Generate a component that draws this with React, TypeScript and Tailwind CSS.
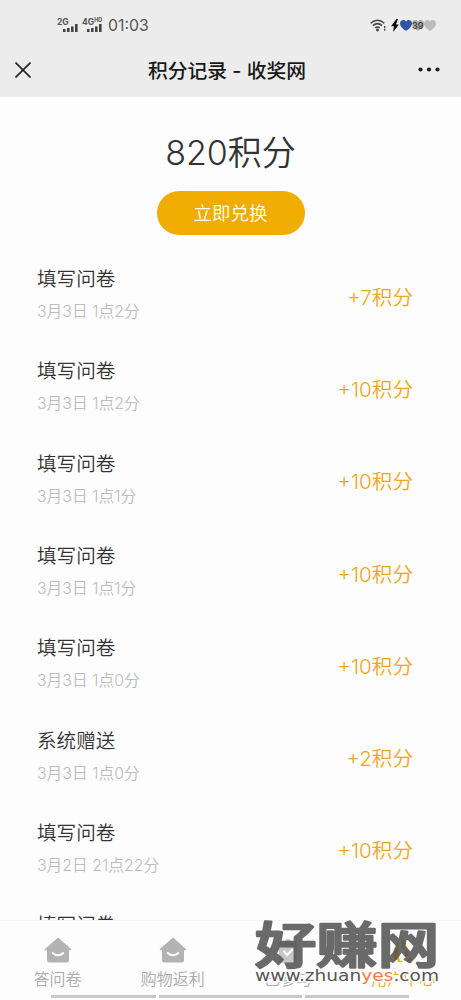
const records = [
  { title: "填写问卷", date: "3月3日 1点2分", points: "+7积分" },
  { title: "填写问卷", date: "3月3日 1点2分", points: "+10积分" },
  { title: "填写问卷", date: "3月3日 1点1分", points: "+10积分" },
  { title: "填写问卷", date: "3月3日 1点1分", points: "+10积分" },
  { title: "填写问卷", date: "3月3日 1点0分", points: "+10积分" },
  { title: "系统赠送", date: "3月3日 1点0分", points: "+2积分" },
  { title: "填写问卷", date: "3月2日 21点22分", points: "+10积分" },
  { title: "填写问卷", date: "3月2日 21点20分", points: "+10积分" },
];

function Signal() {
  return <svg className="h-[8px] w-[15px]" viewBox="0 0 15 8" fill="#444">
    <rect x="0" y="5" width="2.6" height="3" />
    <rect x="4" y="4" width="2.6" height="4" />
    <rect x="8" y="2.5" width="2.6" height="5.5" />
    <rect x="12" y="0" width="2.6" height="8" />
  </svg>
}

function Heart({ color }: { color: string }) {
  return <svg className="h-[11px] w-[12px]" viewBox="0 0 12 11" fill={color}>
    <path d="M6 11C4 9.7 0 7.200 0 3.600C0 1.500 1.500 0 3.300 0C4.500 0 5.500.7 6 1.700C6.500.7 7.500 0 8.700 0C10.500 0 12 1.500 12 3.600C12 7.200 8 9.700 6 11Z" />
  </svg>
}

function StatusBar() {
  return <div className="flex h-[42px] items-start justify-between pl-[57px] pr-[25px] text-[#555]">
    <div className="flex">
      <div className="relative mt-[17px] h-4 w-[25px]">
        <span className="absolute left-0 top-0 text-[8.500px] font-bold leading-[10px]">2G</span>
        <div className="absolute left-[6px] top-[7px] leading-none"><Signal /></div>
      </div>
      <div className="relative mt-[17px] h-4 w-[26px]">
        <span className="absolute left-0 top-0 whitespace-nowrap text-[8.500px] font-bold leading-[10px]">4G<sup className="top-[-3px] text-[5.500px]">HD</sup></span>
        <div className="absolute left-[5px] top-[7px] leading-none"><Signal /></div>
      </div>
      <span className="mt-[14px] text-[15.800px] leading-6">01:03</span>
    </div>
    <div className="mt-[19px] flex items-center">
      <svg className="h-[13px] w-[17px]" viewBox="0 0 17 13" fill="none" stroke="#444" strokeWidth="1.5">
        <path d="M.7 4.200Q7.500-1.700 14.300 4.200M2.900 6.600Q7.500 2.700 12.100 6.600M5.200 9Q7.500 7.100 9.800 9" />
        <circle cx="7.500" cy="11" r=".7" fill="#444" />
        <path d="M14.700 7v5" strokeWidth="1.300" strokeDasharray="2 .8" />
      </svg>
      <svg className="ml-[4px] h-[13px] w-[8px]" viewBox="0 0 8 13" fill="#080808">
        <path d="M5.500 0L0 7.300h3L2 13l6-7.600H4.900L7 0Z" />
      </svg>
      <div className="relative ml-[1px] flex w-[36px] items-center">
        <Heart color="#2c57a5" />
        <Heart color="#aaa" />
        <Heart color="#bbb" />
        <span className="absolute left-[12px] top-[1px] text-[9px] font-semibold leading-[10px] text-[#444]">39</span>
      </div>
    </div>
  </div>
}

function House() {
  return <svg className="h-[26px] w-[28px]" viewBox="0 0 28 26">
    <path d="M14 .5L27 12Q28 13.200 26.500 13.300H25V23Q25 25.500 22.500 25.500H5.500Q3 25.500 3 23V13.300H1.500Q0 13.200 1 12Z" fill="#b3b3b3" />
    <path d="M8.700 16Q14 20.500 19.300 16" fill="none" stroke="#fff" strokeWidth="1.900" strokeLinecap="round" />
  </svg>
}

function Badge() {
  return <svg className="h-[26px] w-[26px]" viewBox="0 0 26 26">
    <path d="M4 4.500H9Q13-1 17 4.500H22V24Q22 26 20 26H6Q4 26 4 24Z" fill="#c7c7c7" />
    <path d="M8.500 14l3.500 4 6-6" fill="none" stroke="#fff" strokeWidth="1.900" />
  </svg>
}

function Flame() {
  return <svg className="h-[26px] w-[26px]" viewBox="0 0 26 26" fill="#f2a900">
    <path d="M13 1C16 5 18 8 14.500 13C12 9 11 5 13 1ZM17 12C20 16 19 19 16 20C14 17 15 14 17 12ZM8 5C4 10 2 17 4 21Q6 24 10 24Q7 16 8 5ZM7 25Q10 22 13 25ZM18 22Q20 19 22 21Q20 25 17 25Z" />
  </svg>
}

const tabs = [
  { label: "答问卷", icon: <House />, active: false },
  { label: "购物返利", icon: <House />, active: false },
  { label: "已参与", icon: <Badge />, active: false },
  { label: "用户中心", icon: <Flame />, active: true },
];

function Watermark() {
  return <svg className="absolute left-[252px] top-[915px] h-[75px] w-[190px]" viewBox="0 0 190 75">
    <text x="3" y="48" textLength="184" lengthAdjust="spacingAndGlyphs" fontSize="48.500" fontWeight="500" fontFamily="Noto Sans CJK SC, sans-serif" fill="#555" stroke="#555" strokeWidth="2.400" strokeLinejoin="round" opacity=".87">好赚网</text>
    <text x="3" y="66" textLength="184" lengthAdjust="spacingAndGlyphs" fontSize="15.500" fontFamily="DejaVu Sans, sans-serif" fill="#555" stroke="#fdfdfd" strokeWidth="3" strokeLinejoin="round" paintOrder="stroke">www.zhuan<tspan fill="#f47b45">yes</tspan>.com</text>
  </svg>
}

export default function App() {
  return <div className="relative flex h-[1000px] w-[461px] flex-col overflow-hidden bg-[#fdfdfd] font-[Inter,'Noto_Sans_CJK_SC',sans-serif] text-[#333]">
    <header className="h-[97px] shrink-0 bg-[#ececec]">
      <StatusBar />
      <div className="flex h-[55px] items-center justify-between pl-[15px] pr-[21px]">
        <svg className="h-[16px] w-[16px]" viewBox="0 0 16 16" stroke="#222" strokeWidth="1.600"><path d="M.5.5l15 15M15.500.5l-15 15" /></svg>
        <h1 className="ml-[5px] mt-[2px] whitespace-pre text-[19.800px] font-medium leading-7 text-[#181818]">积分记录 - 收奖网</h1>
        <svg className="h-[5px] w-[22px]" viewBox="0 0 22 5" fill="#181818"><circle cx="2.500" cy="2.500" r="2.100" /><circle cx="11" cy="2.500" r="2.100" /><circle cx="19.500" cy="2.500" r="2.100" /></svg>
      </div>
    </header>

    <main className="min-h-0 flex-1 overflow-hidden">
      <div className="flex flex-col items-center pt-[32px]">
        <div className="text-[34px] font-[350] leading-[48px]">820积分</div>
        <button className="mt-[14px] h-[44px] w-[148px] rounded-full bg-[#f0ad00] pt-[2px] text-[18.500px] font-[350] text-white">立即兑换</button>
      </div>
      <div className="mt-[17px] pl-[37px] pr-[48px]">
        {records.map((record, index) => (
          <div key={index} className="flex h-[92.300px] items-center justify-between">
            <div className="pb-[5px]">
              <div className="text-[19.600px] font-[350] leading-7">{record.title}</div>
              <div className="mt-[5px] text-[15.800px] font-[350] leading-7 text-[#bcbcbc]">{record.date}</div>
            </div>
            <div className="text-[20.600px] font-[350] text-[#f0a51c]">{record.points}</div>
          </div>
        ))}
      </div>
    </main>

    <nav className="grid h-[80px] shrink-0 grid-cols-4 border-t border-[#f5f5f5] bg-[#fdfdfd] pt-[16px]">
      {tabs.map((tab) => (
        <div key={tab.label} className={tab.active ? "flex flex-col items-center text-[#f2a900]" : "flex flex-col items-center text-[#aaa]"}>
          {tab.icon}
          <span className="mt-[4px] text-[16px] font-[350] leading-6">{tab.label}</span>
        </div>
      ))}
    </nav>
    <div className="absolute bottom-[2px] left-[51px] flex gap-[3px]">
      <div className="h-[3px] w-[105px] bg-[#c7c7c7]" />
      <div className="h-[3px] w-[143px] bg-[#c7c7c7]" />
      <div className="h-[3px] w-[104px] bg-[#c7c7c7]" />
    </div>
    <Watermark />
  </div>
}
